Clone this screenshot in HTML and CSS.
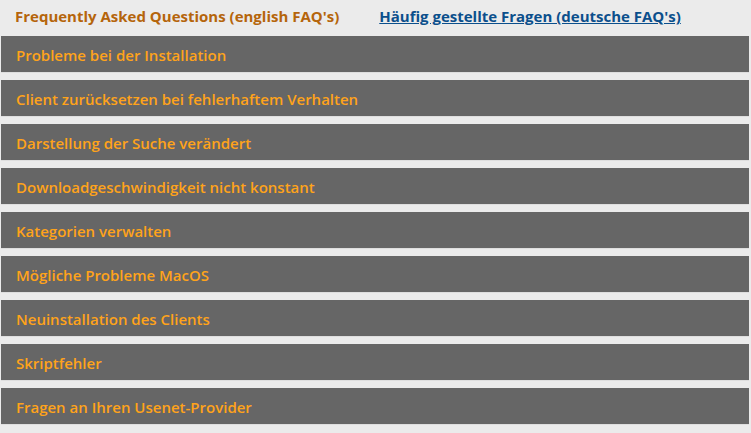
FILE: index.html
```html
<!DOCTYPE html>
<html>
<head>
<meta charset="utf-8">
<link rel="stylesheet" href="styles.css">
</head>
<body>
<div class="header">
  <span class="title">Frequently Asked Questions (english FAQ's)</span>
  <a class="link" href="#">Häufig gestellte Fragen (deutsche FAQ's)</a>
</div>
<div class="list">
  <div class="item">Probleme bei der Installation</div>
  <div class="item">Client zurücksetzen bei fehlerhaftem Verhalten</div>
  <div class="item">Darstellung der Suche verändert</div>
  <div class="item">Downloadgeschwindigkeit nicht konstant</div>
  <div class="item">Kategorien verwalten</div>
  <div class="item">Mögliche Probleme MacOS</div>
  <div class="item">Neuinstallation des Clients</div>
  <div class="item">Skriptfehler</div>
  <div class="item">Fragen an Ihren Usenet-Provider</div>
</div>
</body>
</html>
```
FILE: styles.css
```css
html, body {
  margin: 0;
  padding: 0;
  background: #ebebeb;
  font-family: "Open Sans", "Noto Sans", sans-serif;
}
.header {
  display: flex;
  align-items: center;
  height: 36px;
  box-sizing: border-box;
  padding: 0 0 4px 15px;
  gap: 40px;
  font-weight: 700;
  font-size: 15px;
}
.title {
  color: #b5650b;
}
.link {
  color: #0b4f8c;
  text-decoration: underline;
}
.list {
  display: flex;
  flex-direction: column;
  gap: 7px;
  padding: 0 2px 0 1px;
}
.item {
  height: 37px;
  padding-top: 2px;
  line-height: 34px;
  background: #666666;
  color: #ffa31a;
  font-weight: 600;
  font-size: 15px;
  padding-left: 15px;
  border-bottom: 1px solid #dedede;
  box-sizing: border-box;
}
```
